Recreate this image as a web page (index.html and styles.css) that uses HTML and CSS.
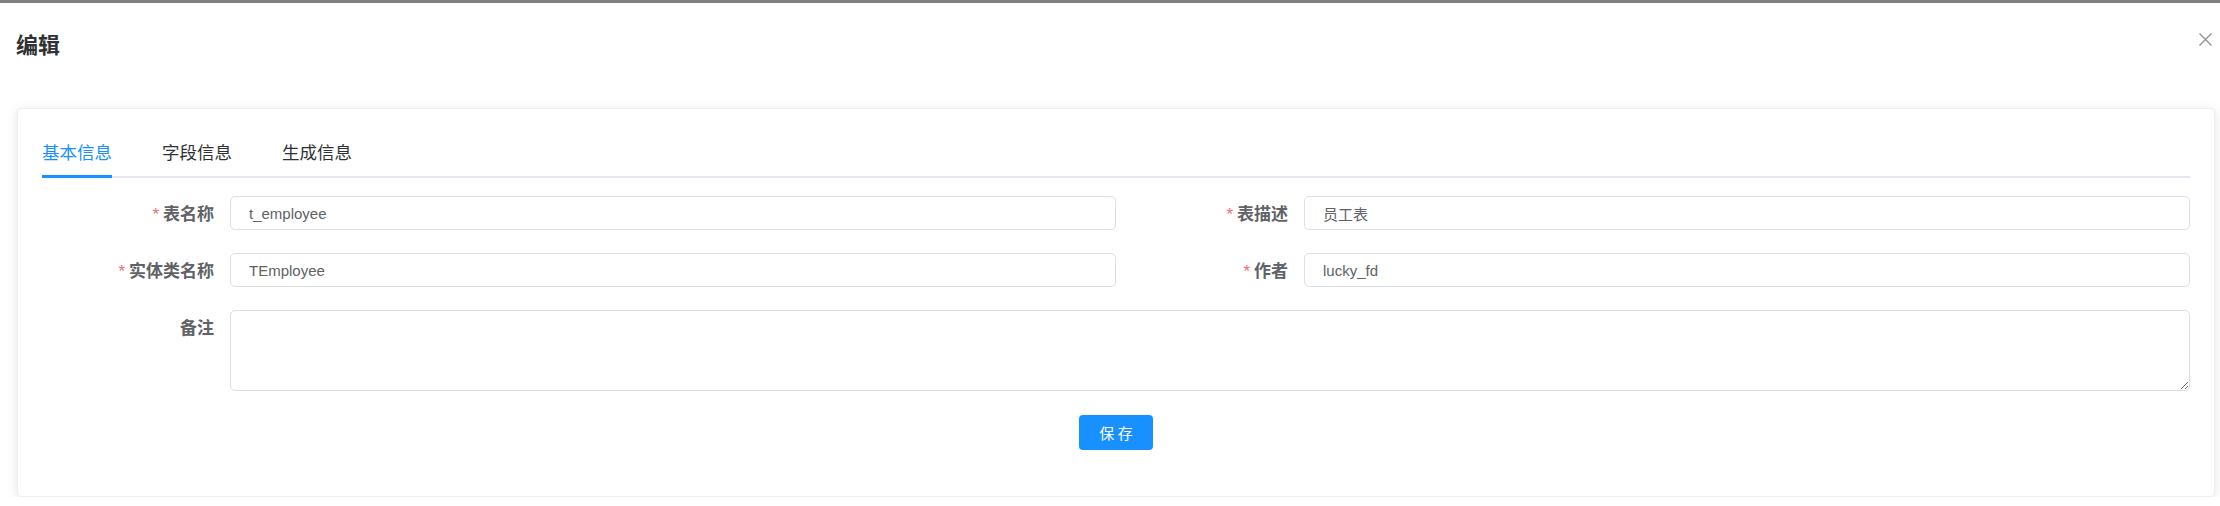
FILE: index.html
```html
<!DOCTYPE html>
<html lang="zh-CN">
<head>
<meta charset="utf-8">
<title>编辑</title>
<link rel="stylesheet" href="styles.css">
</head>
<body>
<div class="topbar"></div>
<div class="dialog">
  <div class="dialog-header">
    <span class="dialog-title">编辑</span>
    <button class="dialog-close" type="button" aria-label="关闭">
      <svg width="13" height="13" viewBox="0 0 13 13"><path d="M0.5 0.5 L12.5 12.5 M12.5 0.5 L0.5 12.5" stroke="#909399" stroke-width="1.4" fill="none"/></svg>
    </button>
  </div>
  <div class="dialog-body">
    <div class="card">
      <div class="tabs">
        <div class="tab active">基本信息</div>
        <div class="tab">字段信息</div>
        <div class="tab">生成信息</div>
      </div>
      <form class="form">
        <div class="grid">
          <div class="item">
            <label class="label"><span class="star">*</span>表名称</label>
            <input class="input" type="text" value="t_employee">
          </div>
          <div class="item">
            <label class="label"><span class="star">*</span>表描述</label>
            <input class="input" type="text" value="员工表">
          </div>
          <div class="item">
            <label class="label"><span class="star">*</span>实体类名称</label>
            <input class="input" type="text" value="TEmployee">
          </div>
          <div class="item">
            <label class="label"><span class="star">*</span>作者</label>
            <input class="input" type="text" value="lucky_fd">
          </div>
        </div>
        <div class="item full">
          <label class="label">备注</label>
          <textarea class="textarea"></textarea>
        </div>
        <div class="actions">
          <button class="btn-primary" type="button">保 存</button>
        </div>
      </form>
    </div>
  </div>
</div>
</body>
</html>
```
FILE: styles.css
```css
* { box-sizing: border-box; }
html, body { margin: 0; padding: 0; background: #ffffff; }
body {
  font-family: "Liberation Sans", "Noto Sans CJK SC", sans-serif;
  color: #606266;
  overflow: hidden;
}
.topbar { height: 3px; background: #808080; }
.dialog { position: relative; }
.dialog-header { padding: 25px 16px 0; }
.dialog-title {
  display: block;
  font-family: "Noto Sans CJK SC", sans-serif;
  font-size: 22px;
  font-weight: 700;
  line-height: 30px;
  color: #303133;
}
.dialog-close {
  position: absolute;
  top: 30px;
  right: 8px;
  width: 13px;
  height: 13px;
  padding: 0;
  border: 0;
  background: transparent;
  display: flex;
}
.dialog-body { padding: 50px 5px 0 17px; }
.card {
  border: 1px solid #ebeef5;
  border-radius: 4px;
  background: #fff;
  box-shadow: 0 2px 12px 0 rgba(0, 0, 0, 0.1);
  padding: 19px 24px 24px;
}
.tabs {
  display: flex;
  border-bottom: 2px solid #e4e7ed;
  margin-bottom: 18px;
}
.tab {
  position: relative;
  height: 48px;
  line-height: 48px;
  padding: 0 25px;
  font-family: "Noto Sans CJK SC", sans-serif;
  font-size: 17.5px;
  color: #303133;
}
.tab:first-child { padding-left: 0; }
.tab.active { color: #1890ff; }
.tab.active::after {
  content: "";
  position: absolute;
  left: 0;
  right: 25px;
  bottom: -2px;
  height: 3px;
  background: #1890ff;
}
.grid {
  display: grid;
  grid-template-columns: 1fr 1fr;
  grid-auto-rows: 34px;
  row-gap: 23px;
  margin-bottom: 23px;
}
.item { display: flex; align-items: flex-start; }
.item.full { margin-bottom: 24px; }
.label {
  display: block;
  flex: 0 0 188px;
  height: 34px;
  padding-right: 16px;
  text-align: right;
  font-family: "Noto Sans CJK SC", sans-serif;
  font-size: 17px;
  font-weight: 700;
  line-height: 34px;
  color: #606266;
  white-space: nowrap;
}
.star {
  color: #f56c6c;
  font-family: "Liberation Sans", sans-serif;
  font-weight: 400;
  font-size: 17px;
  line-height: 0;
  margin-right: 4px;
}
.input, .textarea {
  flex: 1 1 auto;
  min-width: 0;
  margin: 0;
  border: 1px solid #dcdfe6;
  border-radius: 5px;
  background: #fff;
  color: #606266;
  font-family: "Liberation Sans", "Noto Sans CJK SC", sans-serif;
  font-size: 15px;
  outline: none;
}
.input { height: 34px; padding: 0 18px; }
.textarea { height: 81px; padding: 6px 18px; resize: vertical; display: block; }
.actions {
  display: flex;
  justify-content: center;
  padding-bottom: 22px;
}
.btn-primary {
  height: 35px;
  padding: 0 20px;
  border: 0;
  border-radius: 4px;
  background: #1890ff;
  color: #fff;
  font-family: "Noto Sans CJK SC", sans-serif;
  font-size: 15px;
}
```
